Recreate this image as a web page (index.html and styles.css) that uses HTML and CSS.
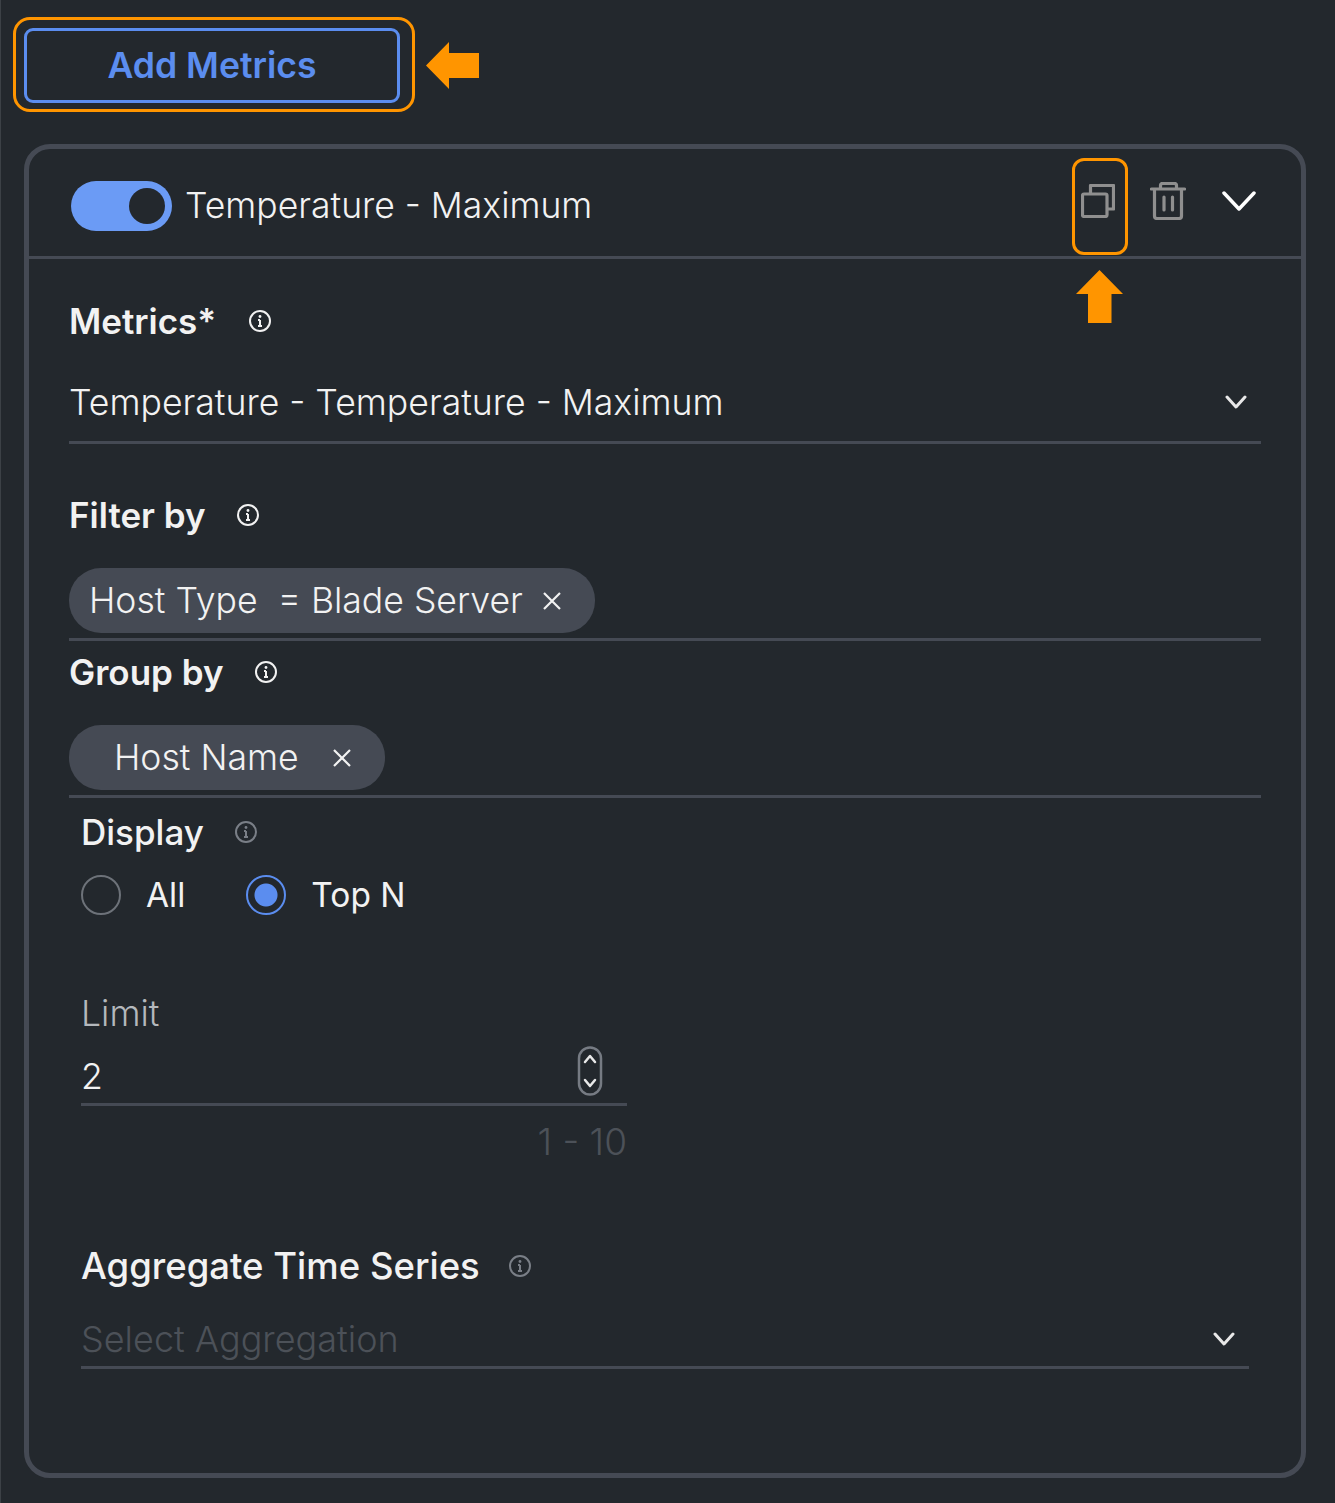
FILE: index.html
```html
<!DOCTYPE html>
<html lang="en">
<head>
  <meta charset="UTF-8" />
  <title>Add Metrics</title>
  <link rel="stylesheet" href="styles.css">
</head>
<body>
  <div class="top-row">
    <button class="add-btn">Add Metrics</button>
    <svg class="arrow-left" width="53" height="47" viewBox="0 0 53 47"><path d="M0 23.500 23 0V11H53V36H23V47Z" fill="#ff9500"/></svg>
  </div>

  <div class="card">
    <div class="card-header">
      <span class="toggle"><span class="toggle-knob"></span></span>
      <span class="card-title">Temperature - Maximum</span>
      <div class="header-icons">
        <span class="copy-wrap">
          <svg width="34" height="34" viewBox="0 0 34 34" fill="none" stroke="#8f8f8f" stroke-width="3.200" stroke-linejoin="round"><path d="M9.500 9.500V1.500H32.500V25H26"/><rect x="1.500" y="10" width="24.500" height="22.500" rx="1.500"/></svg>
          <svg class="arrow-up" width="47" height="53" viewBox="0 0 47 53"><path d="M23.500 0 47 24H35.500V53H12V24H0Z" fill="#ff9500"/></svg>
        </span>
        <svg width="36" height="38" viewBox="0 0 36 38" fill="none" stroke="#8f8f8f" stroke-width="3.200" stroke-linejoin="round" stroke-linecap="round"><path d="M1.500 7H34.500M10.500 7V3.500Q10.500 1.500 12.500 1.500H24.500Q26.500 1.500 26.500 3.500V7M4.500 7V34Q4.500 36.500 7 36.500H29Q31.500 36.500 31.500 34V7M14 15V28M22.500 15V28"/></svg>
        <svg width="34" height="20" viewBox="0 0 34 20" fill="none" stroke="#fff" stroke-width="3.500" stroke-linecap="round" stroke-linejoin="round"><path d="M2 2 17 18 32 2"/></svg>
      </div>
    </div>

    <div class="card-body">
      <div class="label metrics-label">Metrics*
        <svg class="info" width="24" height="24" viewBox="0 0 24 24"><circle cx="12" cy="12" r="10" fill="none" stroke="currentColor" stroke-width="2"/><path d="M12 11V17M10 11H12M10 17H14" fill="none" stroke="currentColor" stroke-width="2"/><circle cx="12" cy="7.500" r="1.400" fill="currentColor"/></svg>
      </div>
      <div class="select-line">
        <span>Temperature - Temperature - Maximum</span>
        <svg width="22" height="14" viewBox="0 0 22 14" fill="none" stroke="#e8e8e8" stroke-width="3" stroke-linecap="round" stroke-linejoin="round"><path d="M2 2 11 12 20 2"/></svg>
      </div>

      <div class="label filter-label">Filter by
        <svg class="info" width="24" height="24" viewBox="0 0 24 24"><circle cx="12" cy="12" r="10" fill="none" stroke="currentColor" stroke-width="2"/><path d="M12 11V17M10 11H12M10 17H14" fill="none" stroke="currentColor" stroke-width="2"/><circle cx="12" cy="7.500" r="1.400" fill="currentColor"/></svg>
      </div>
      <div class="chip-line">
        <span class="chip chip-filter">Host Type&nbsp; = Blade Server
          <svg class="chip-x" width="20" height="20" viewBox="0 0 20 20" stroke="#f2f2f2" stroke-width="2.200"><path d="M2 2 18 18M18 2 2 18"/></svg>
        </span>
      </div>

      <div class="label group-label">Group by
        <svg class="info" width="24" height="24" viewBox="0 0 24 24"><circle cx="12" cy="12" r="10" fill="none" stroke="currentColor" stroke-width="2"/><path d="M12 11V17M10 11H12M10 17H14" fill="none" stroke="currentColor" stroke-width="2"/><circle cx="12" cy="7.500" r="1.400" fill="currentColor"/></svg>
      </div>
      <div class="chip-line">
        <span class="chip chip-group">Host Name
          <svg class="chip-x" width="20" height="20" viewBox="0 0 20 20" stroke="#f2f2f2" stroke-width="2.200"><path d="M2 2 18 18M18 2 2 18"/></svg>
        </span>
      </div>

      <div class="indented">
        <div class="label display-label">Display
          <svg class="info info-dim" width="24" height="24" viewBox="0 0 24 24"><circle cx="12" cy="12" r="10" fill="none" stroke="currentColor" stroke-width="2"/><path d="M12 11V17M10 11H12M10 17H14" fill="none" stroke="currentColor" stroke-width="2"/><circle cx="12" cy="7.500" r="1.400" fill="currentColor"/></svg>
        </div>
        <div class="radios">
          <span class="radio"></span><span class="radio-text">All</span>
          <span class="radio radio-on"></span><span class="radio-text">Top N</span>
        </div>

        <div class="limit-label">Limit</div>
        <div class="limit-field">
          <span class="limit-value">2</span>
          <svg width="26" height="50" viewBox="0 0 26 50" fill="none" stroke-linecap="round" stroke-linejoin="round"><rect x="2" y="1.500" width="22" height="47" rx="11" stroke="#767b83" stroke-width="2.500"/><path d="M8 16 13 10 18 16M8 34 13 40 18 34" stroke="#e8e8e8" stroke-width="2.500"/></svg>
        </div>
        <div class="limit-hint">1 - 10</div>

        <div class="label aggregate-label">Aggregate Time Series
          <svg class="info info-dim" width="24" height="24" viewBox="0 0 24 24"><circle cx="12" cy="12" r="10" fill="none" stroke="currentColor" stroke-width="2"/><path d="M12 11V17M10 11H12M10 17H14" fill="none" stroke="currentColor" stroke-width="2"/><circle cx="12" cy="7.500" r="1.400" fill="currentColor"/></svg>
        </div>
        <div class="select-line aggregate-select">
          <span>Select Aggregation</span>
          <svg width="22" height="14" viewBox="0 0 22 14" fill="none" stroke="#e8e8e8" stroke-width="3" stroke-linecap="round" stroke-linejoin="round"><path d="M2 2 11 12 20 2"/></svg>
        </div>
      </div>
    </div>
  </div>
</body>
</html>
```

FILE: styles.css
```css
* {
  box-sizing: border-box;
}
body {
  margin: 0;
  height: 1503px;
  overflow: hidden;
  background-color: #23282d;
  border-left: 1px solid #3c4146;
  font-family: "Inter", "Liberation Sans", sans-serif;
  font-size: 35.6px;
  font-weight: 300;
  color: #f2f2f2;
}
.top-row {
  display: flex;
  align-items: center;
  padding: 28px 0 0 23px;
}
.add-btn {
  position: relative;
  width: 376px;
  height: 75px;
  border: 3px solid #5b8def;
  border-radius: 9px;
  background: none;
  color: #5b8def;
  font-family: inherit;
  font-size: 35.6px;
  font-weight: 600;
}
/* orange callout round the button */
.add-btn::after {
  content: "";
  position: absolute;
  box-sizing: border-box;
  left: -14px;
  top: -14px;
  width: 402px;
  height: 95px;
  border: 3px solid #ff9500;
  border-radius: 17px;
}
.arrow-left {
  margin-left: 26px;
}
.card {
  margin: 41px 0 0 23px;
  width: 1282px;
  height: 1334px;
  border: 5px solid #454a54;
  border-radius: 26px;
}
.card-header {
  display: flex;
  align-items: center;
  height: 110px;
  padding: 0 45px 3px 42px;
  border-bottom: 3px solid #454a54;
}
.toggle {
  display: flex;
  justify-content: flex-end;
  align-items: center;
  width: 101px;
  height: 50px;
  margin-top: 10px;
  padding-right: 7px;
  border-radius: 25px;
  background: #6b9bf5;
}
.toggle-knob {
  width: 36px;
  height: 36px;
  border-radius: 50%;
  background: #23282d;
}
.card-title {
  margin-left: 13px;
  margin-top: 8px;
  font-size: 35.5px;
}
.header-icons {
  display: flex;
  align-items: center;
  gap: 36px;
  margin-left: auto;
}
.copy-wrap {
  position: relative;
  display: flex;
  margin-right: -1px;
}
/* orange callout round the copy icon */
.copy-wrap::after {
  content: "";
  position: absolute;
  box-sizing: border-box;
  left: -9px;
  top: -26px;
  width: 56px;
  height: 97px;
  border: 3px solid #ff9500;
  border-radius: 12px;
}
.arrow-up {
  position: absolute;
  left: -5px;
  top: 86px;
}
.card-body {
  padding: 0 40px;
}
.label {
  display: flex;
  align-items: center;
  height: 44px;
  font-size: 35px;
  font-weight: 600;
}
.info {
  color: #f2f2f2;
}
.info-dim {
  color: #7a7f87;
}
.metrics-label {
  margin-top: 40px;
}
.metrics-label .info {
  margin-left: 32px;
}
.select-line {
  display: flex;
  justify-content: space-between;
  align-items: center;
  height: 81px;
  margin-top: 20px;
  padding: 0 14px 0 0;
  border-bottom: 3px solid #454a54;
}
.filter-label {
  margin-top: 49px;
}
.filter-label .info {
  margin-left: 30px;
}
.chip-line {
  height: 73px;
  margin-top: 31px;
  border-bottom: 3px solid #454a54;
}
.chip {
  display: inline-flex;
  align-items: center;
  height: 65px;
  border-radius: 32px;
  background: #454a54;
}
.chip-filter {
  width: 526px;
  padding-left: 20px;
}
.chip-filter .chip-x {
  margin-left: 19px;
}
.chip-group {
  width: 316px;
  padding-left: 45px;
}
.chip-group .chip-x {
  margin-left: 33px;
}
.group-label {
  margin-top: 9px;
}
.group-label .info {
  margin-left: 30px;
}
.indented {
  padding: 0 12px;
}
.display-label {
  margin-top: 12px;
  font-weight: 500;
}
.display-label .info {
  margin-left: 30px;
}
.radios {
  display: flex;
  align-items: center;
  height: 44px;
  margin-top: 19px;
}
.radio {
  width: 40px;
  height: 40px;
  border: 2px solid #6d7279;
  border-radius: 50%;
}
.radio-on {
  border-color: #5b8def;
  background: radial-gradient(circle, #5b8def 0 11px, transparent 12px);
}
.radio-text {
  margin: 0 61px 0 25px;
  font-size: 33.5px;
  font-weight: 400;
}
.limit-label {
  height: 44px;
  margin-top: 75px;
  line-height: 44px;
  color: #b4b8bc;
}
.limit-field {
  display: flex;
  justify-content: space-between;
  align-items: center;
  width: 546px;
  height: 67px;
  margin-top: 3px;
  padding-right: 24px;
  border-bottom: 3px solid #454a54;
}
.limit-value {
  margin-top: 10px;
}
.limit-hint {
  width: 546px;
  margin-top: 14px;
  height: 44px;
  line-height: 44px;
  font-size: 37px;
  text-align: right;
  color: #4c5158;
}
.aggregate-label {
  margin-top: 80px;
  font-size: 36.500px;
  font-weight: 500;
}
.aggregate-label .info {
  margin-left: 28px;
}
.aggregate-select {
  height: 81px;
  margin-top: 0;
  padding: 24px 14px 0 0;
  font-size: 36px;
  color: #4c5158;
}
```
